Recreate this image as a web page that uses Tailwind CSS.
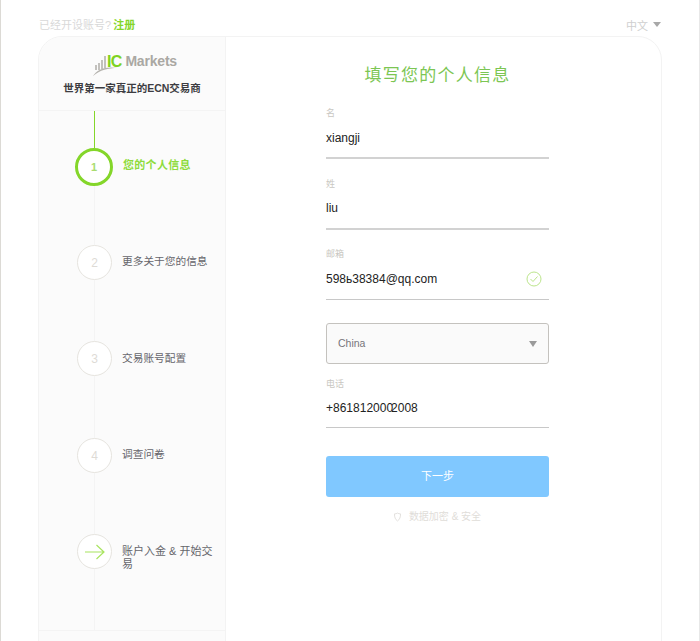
<!DOCTYPE html>
<html lang="zh-CN">
<head>
    <meta charset="UTF-8">
    <meta name="viewport" content="width=device-width, initial-scale=1.0">
    <title>IC Markets</title>
    <script src="https://cdn.jsdelivr.net/npm/@tailwindcss/browser@4"></script>
</head>
<body class="bg-white font-['Liberation_Sans','Noto_Sans_CJK_SC',sans-serif]">
<div class="h-[641px] overflow-hidden border-x border-l-[#dcdad5] border-r-[#e8e8e8] pl-[37px] pr-[37px]">

    <!-- top bar -->
    <div class="h-[36px] flex items-start justify-between pt-[18px] text-[11px] leading-[14px]">
        <div class="ml-[1px] text-[#d9d9d9]">已经开设账号? <a class="inline-block -ml-[1px] text-[#84d62a] font-bold">注册</a></div>
        <div class="flex items-center gap-[5px] pr-[1px] mt-[1px] text-[#cfcfcf]">
            <span class="-ml-[1px]">中文</span>
            <span class="w-0 h-0 border-x-[4px] border-x-transparent border-t-[5px] border-t-[#a8a8a8] mb-[3px]"></span>
        </div>
    </div>

    <!-- card -->
    <div class="h-[640px] flex border border-[#f3f3f3] rounded-[24px] overflow-hidden">

        <!-- steps -->
        <div class="w-[187px] shrink-0 bg-[#fbfbfb] border-r border-[#f3f3f3] flex flex-col">
            <div class="h-[74px] shrink-0 border-b border-[#f4f4f4] relative">
                <!-- logo -->
                <div class="flex items-start pl-[54px] pt-[17px]">
                    <svg width="26" height="24" viewBox="0 0 26 24" class="-mt-[1px]">
                        <path d="M3 12v5M6 10v7M9 7v9M12 3v12" stroke="#b5b3ae" stroke-width="1.600"/>
                        <path d="M0 23C4 16 13 13 25 15C15 15 7 17 0 23Z" fill="#b5b3ae"/>
                    </svg>
                    <span class="text-[#7ed321] text-[16px] font-bold tracking-[-.8px] leading-[15px] -ml-[12px]">IC</span>
                    <span class="text-[#aaa8a3] text-[14px] font-bold tracking-[-.2px] leading-[15px] ml-[4px]">Markets</span>
                </div>
                <div class="absolute top-[44px] left-0 right-0 text-center text-[10.500px] leading-[14px] font-bold text-[#3d3d42]">世界第一家真正的ECN交易商</div>
            </div>

            <div class="relative h-[520px] shrink-0 border-b border-[#f4f4f4]">
                <div class="absolute left-[55px] top-0 bottom-0 w-px bg-[#f4f4f4]"></div>
                <div class="absolute left-[55px] top-0 h-[38px] w-px bg-[#84d62a]"></div>

                <div class="relative h-[97px] pt-[37px] pl-[36px] flex">
                    <div class="w-[38px] h-[38px] shrink-0 rounded-full border-[3px] border-[#84d62a] bg-white flex items-center justify-center text-[11px] font-bold text-[#a9dc70]">1</div>
                    <div class="ml-[10px] mt-[10px] text-[11px] tracking-[.3px] leading-[14px] font-bold text-[#8edb3c]">您的个人信息</div>
                </div>
                <div class="relative h-[96px] pt-[37px] pl-[38px] flex">
                    <div class="w-[35px] h-[35px] shrink-0 rounded-full border border-[#e6e4df] bg-white flex items-center justify-center text-[12px] text-[#dedbd6]">2</div>
                    <div class="ml-[10px] mt-[9px] text-[10.700px] leading-[14px] text-[#66666b]">更多关于您的信息</div>
                </div>
                <div class="relative h-[97px] pt-[37px] pl-[38px] flex">
                    <div class="w-[35px] h-[35px] shrink-0 rounded-full border border-[#e6e4df] bg-white flex items-center justify-center text-[12px] text-[#dedbd6]">3</div>
                    <div class="ml-[10px] mt-[10px] text-[10.700px] leading-[14px] text-[#66666b]">交易账号配置</div>
                </div>
                <div class="relative h-[96px] pt-[37px] pl-[38px] flex">
                    <div class="w-[35px] h-[35px] shrink-0 rounded-full border border-[#e6e4df] bg-white flex items-center justify-center text-[12px] text-[#dedbd6]">4</div>
                    <div class="ml-[10px] mt-[9px] text-[10.700px] leading-[14px] text-[#66666b]">调查问卷</div>
                </div>
                <div class="relative h-[94px] pt-[37px] pl-[38px] flex">
                    <div class="w-[35px] h-[35px] shrink-0 rounded-full border border-[#e6e4df] bg-white flex items-center justify-center">
                        <svg width="20" height="16" viewBox="0 0 20 16" fill="none" stroke="#a8e45f" stroke-width="1.200">
                            <path d="M0 8H19M11.500 1L19 8L11.500 15"/>
                        </svg>
                    </div>
                    <div class="ml-[10px] mt-[11px] w-[92px] text-[11px] leading-[13px] text-[#66666b]">账户入金 &amp; 开始交易</div>
                </div>
            </div>
        </div>

        <!-- form -->
        <div class="flex-1 pl-[100px]">
            <div class="w-[223px]">
                <h1 class="mt-[28px] h-[22px] text-center text-[17px] leading-[22px] tracking-[1.250px] text-[#7cc653] whitespace-nowrap">填写您的个人信息</h1>

                <div class="mt-[20px] h-[52px] border-b-2 border-[#d2d2d2]">
                    <div class="text-[9px] leading-[12px] text-[#c9c7c2]">名</div>
                    <div class="mt-[11px] text-[12px] leading-[16px] text-[#222]">xiangji</div>
                </div>
                <div class="mt-[19px] h-[52px] border-b-2 border-[#d2d2d2]">
                    <div class="text-[9px] leading-[12px] text-[#c9c7c2]">姓</div>
                    <div class="mt-[10px] text-[12px] leading-[16px] text-[#222]">liu</div>
                </div>
                <div class="mt-[19px] h-[52px] border-b border-[#c8c8c8] relative">
                    <div class="-mt-[1px] text-[9px] leading-[12px] text-[#c9c7c2]">邮箱</div>
                    <div class="mt-[11px] text-[12px] leading-[16px] text-[#222]">598ь38384@qq.com</div>
                    <svg class="absolute right-[7px] top-[23px]" width="16" height="16" viewBox="0 0 16 16" fill="none" stroke="#bce58c">
                        <circle cx="8" cy="8" r="7"/>
                        <path d="M4.500 8L7 10.500L11.500 5.500"/>
                    </svg>
                </div>

                <div class="mt-[23px] h-[41px] border border-[#c4c2be] rounded-[3px] bg-[#fafafa] flex items-center justify-between pl-[11px] pr-[11px]">
                    <span class="text-[10.500px] text-[#77757a]">China</span>
                    <span class="w-0 h-0 border-x-[4px] border-x-transparent border-t-[6px] border-t-[#9a9a9a]"></span>
                </div>

                <div class="mt-[14px] h-[50px] border-b border-[#c8c8c8]">
                    <div class="text-[9px] leading-[12px] text-[#c9c7c2]">电话</div>
                    <div class="mt-[10px] text-[12px] leading-[16px] text-[#222]">+861812000<span class="-ml-[2px]">2008</span></div>
                </div>

                <div class="mt-[28px] h-[41px] rounded-[3px] bg-[#80c8ff] flex items-center justify-center text-[11px] text-white">下一步</div>

                <div class="mt-[13px] flex items-center justify-center gap-[8px] text-[10px] leading-[14px] text-[#dfddd9]">
                    <svg width="7" height="10" viewBox="0 0 8 10" fill="none" stroke="#dfddd9">
                        <path d="M.5 1.500C2 1.500 3 1 4 .5C5 1 6 1.500 7.500 1.500C7.500 5 6.500 8 4 9.500C1.500 8 .5 5 .5 1.500Z"/>
                    </svg>
                    <span>数据加密 &amp; 安全</span>
                </div>
            </div>
        </div>
    </div>
</div>
</body>
</html>
